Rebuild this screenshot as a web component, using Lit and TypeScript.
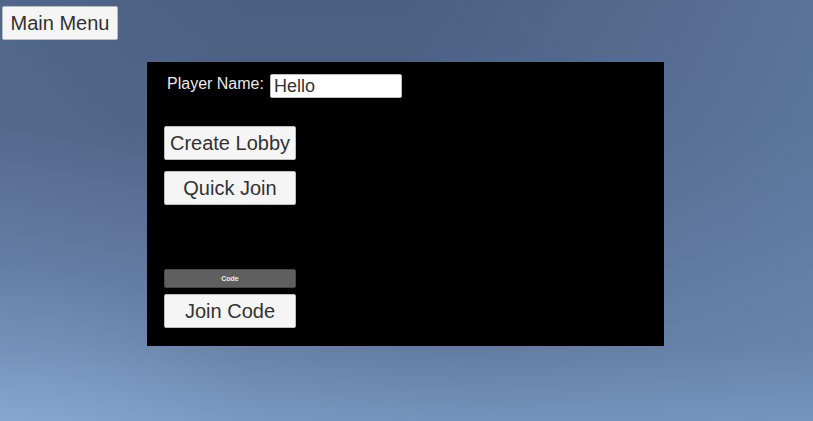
import { LitElement, html, css } from "lit";
import { customElement, state } from "lit/decorators.js";

@customElement("app-root")
export class AppRoot extends LitElement {
  static styles = css`
    :host {
      display: block;
      box-sizing: border-box;
      min-height: 100vh;
      padding: 6px 0 24px;
      font-family: "Liberation Sans", Arial, sans-serif;
      background:
        radial-gradient(ellipse 60% 75% at 0% 105%, rgba(150, 182, 226, 0.58), rgba(150, 182, 226, 0.14) 55%, rgba(150, 182, 226, 0)),
        linear-gradient(90deg, rgba(120, 152, 196, 0.12), rgba(120, 152, 196, 0) 30%, rgba(120, 152, 196, 0) 50%, rgba(120, 152, 196, 0.35)),
        linear-gradient(180deg, #4b5f80, #4e6385 30%, #576c91 55%, #6079a0 82%, #7492bb);
    }
    * {
      box-sizing: border-box;
    }
    .button {
      display: block;
      height: 34px;
      padding: 0;
      border: 1px solid #bcbcbc;
      border-radius: 2px;
      background: #f5f5f5;
      color: #323232;
      font: inherit;
      font-size: 20px;
      line-height: 32px;
      text-align: center;
      white-space: nowrap;
    }
    .back {
      width: 116px;
      margin: 0 2px 22px;
    }
    .panel {
      margin: 0 149px 0 147px;
      padding: 12px 17px 18px;
      background: #000;
    }
    .name-row {
      display: flex;
      gap: 6px;
      margin-bottom: 28px;
      padding-left: 3px;
    }
    .name-label {
      color: #ebebeb;
      font-size: 16px;
      line-height: 20px;
      white-space: nowrap;
    }
    .name-input {
      width: 132px;
      height: 24px;
      padding: 0 3px;
      border: 1px solid #bcbcbc;
      border-radius: 2px;
      background: #fff;
      color: #323232;
      font: inherit;
      font-size: 18px;
    }
    .actions,
    .join {
      display: grid;
      width: 132px;
    }
    .actions {
      gap: 11px;
      margin-bottom: 64px;
    }
    .join {
      gap: 6px;
    }
    .code-input {
      width: 100%;
      height: 19px;
      padding: 0;
      border: 1px solid #484848;
      border-radius: 2px;
      background: #5f5f5f;
      color: #f0f0f0;
      font: inherit;
      font-size: 7px;
      font-weight: 700;
      text-align: center;
    }
    .code-input::placeholder {
      color: #f0f0f0;
      opacity: 1;
    }
  `;

  @state() private playerName = "Hello";
  @state() private code = "";

  render() {
    return html`
      <button class="button back" type="button">Main Menu</button>
      <main class="panel">
        <div class="name-row">
          <label class="name-label" for="player-name">Player Name:</label>
          <input
            class="name-input"
            id="player-name"
            type="text"
            .value=${this.playerName}
            @input=${(e: Event) => (this.playerName = (e.target as HTMLInputElement).value)}
          />
        </div>
        <div class="actions">
          <button class="button" type="button">Create Lobby</button>
          <button class="button" type="button">Quick Join</button>
        </div>
        <div class="join">
          <input
            class="code-input"
            type="text"
            aria-label="Code"
            placeholder="Code"
            .value=${this.code}
            @input=${(e: Event) => (this.code = (e.target as HTMLInputElement).value)}
          />
          <button class="button" type="button">Join Code</button>
        </div>
      </main>
    `;
  }
}
